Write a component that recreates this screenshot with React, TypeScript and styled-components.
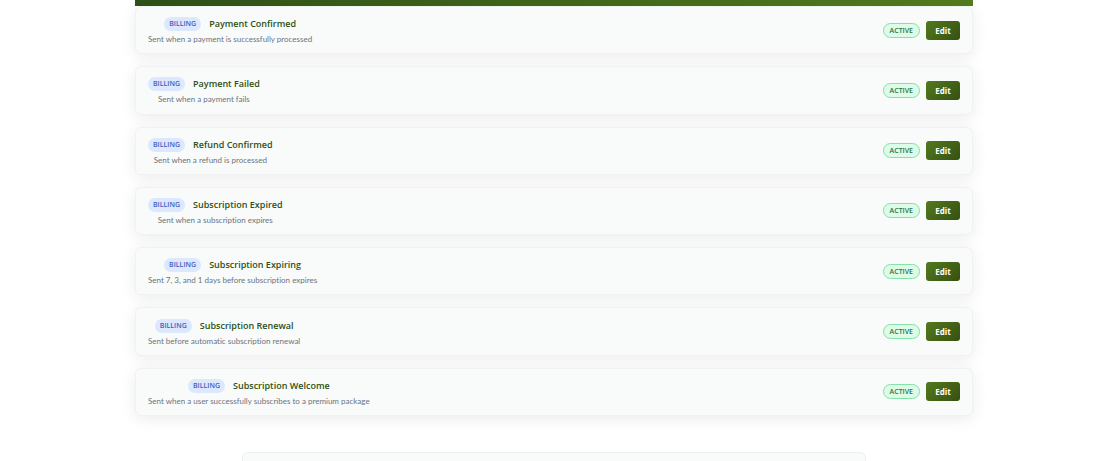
import React from "react";
import styled, { createGlobalStyle } from "styled-components";

const GlobalStyle = createGlobalStyle`
  * { box-sizing: border-box; }
  body {
    margin: 0;
    background: #ffffff;
    font-family: "Open Sans", "Noto Sans", sans-serif;
  }
`;

const Page = styled.main`
  display: flex;
  flex-direction: column;
  align-items: center;
  padding-left: 8px;
`;

const TemplateSection = styled.section`
  width: 100%;
  max-width: 838px;
`;

const SectionBanner = styled.header`
  position: relative;
  z-index: 1;
  height: 6px;
  background: linear-gradient(90deg, #2d5016 0%, #527a1e 100%);
`;

const TemplateList = styled.ul`
  display: grid;
  grid-auto-rows: 1fr;
  gap: 12px;
  min-height: 410px;
  margin: 0;
  padding: 0;
  list-style: none;
`;

const TemplateCard = styled.li`
  display: flex;
  align-items: center;
  justify-content: space-between;
  padding: 4px 12px;
  border: 1px solid #f0f2f1;
  border-radius: 6px;
  background: #f9fbfa;
  box-shadow: 0 3px 16px rgba(0, 0, 0, 0.08);
`;

const TemplateInfo = styled.div`
  display: flex;
  flex-direction: column;
  align-items: center;
  gap: 1px;
  padding-top: 3px;
`;

const TitleRow = styled.div`
  display: flex;
  align-items: center;
  gap: 8px;
`;

const Category = styled.span`
  padding: 0 5px;
  border-radius: 7px;
  background: #dbe8fe;
  color: #3f5fc0;
  font-size: 7px;
  font-weight: 600;
  line-height: 14px;
  text-transform: uppercase;
`;

const TemplateName = styled.h3`
  margin: 0;
  color: #2d5016;
  font-size: 9px;
  font-weight: 600;
  line-height: 14px;
`;

const Description = styled.p`
  margin: 0;
  color: #6b7280;
  font-family: Lato, "Open Sans", sans-serif;
  font-size: 8px;
  font-variant-ligatures: none;
  line-height: 14px;
`;

const Actions = styled.div`
  display: flex;
  align-items: center;
  gap: 6px;
`;

const Status = styled.span`
  padding: 0 6px;
  border: 1px solid #86e0a8;
  border-radius: 8px;
  background: #dcfce7;
  color: #2f7048;
  font-size: 7px;
  font-weight: 600;
  line-height: 13px;
  text-transform: uppercase;
`;

const EditButton = styled.button`
  min-width: 34px;
  padding: 0 8px;
  border: 0;
  border-radius: 3px;
  background: linear-gradient(135deg, #527a1e 0%, #375012 100%);
  color: #ffffff;
  font-family: inherit;
  font-size: 8px;
  font-weight: 700;
  line-height: 19px;
  cursor: pointer;
`;

const NextPanel = styled.section`
  width: 100%;
  max-width: 624px;
  height: 12px;
  margin-top: 36px;
  border: 1px solid #edf0ef;
  border-bottom: 0;
  border-radius: 6px 6px 0 0;
  background: #f9fbfa;
`;

const templates = [
  { name: "Payment Confirmed", description: "Sent when a payment is successfully processed" },
  { name: "Payment Failed", description: "Sent when a payment fails" },
  { name: "Refund Confirmed", description: "Sent when a refund is processed" },
  { name: "Subscription Expired", description: "Sent when a subscription expires" },
  { name: "Subscription Expiring", description: "Sent 7, 3, and 1 days before subscription expires" },
  { name: "Subscription Renewal", description: "Sent before automatic subscription renewal" },
  { name: "Subscription Welcome", description: "Sent when a user successfully subscribes to a premium package" },
];

export default function App() {
  return (
    <>
      <GlobalStyle />
      <Page>
        <TemplateSection>
          <SectionBanner />
          <TemplateList>
            {templates.map((template) => (
              <TemplateCard key={template.name}>
                <TemplateInfo>
                  <TitleRow>
                    <Category>Billing</Category>
                    <TemplateName>{template.name}</TemplateName>
                  </TitleRow>
                  <Description>{template.description}</Description>
                </TemplateInfo>
                <Actions>
                  <Status>Active</Status>
                  <EditButton type="button">Edit</EditButton>
                </Actions>
              </TemplateCard>
            ))}
          </TemplateList>
        </TemplateSection>
        <NextPanel />
      </Page>
    </>
  );
}
